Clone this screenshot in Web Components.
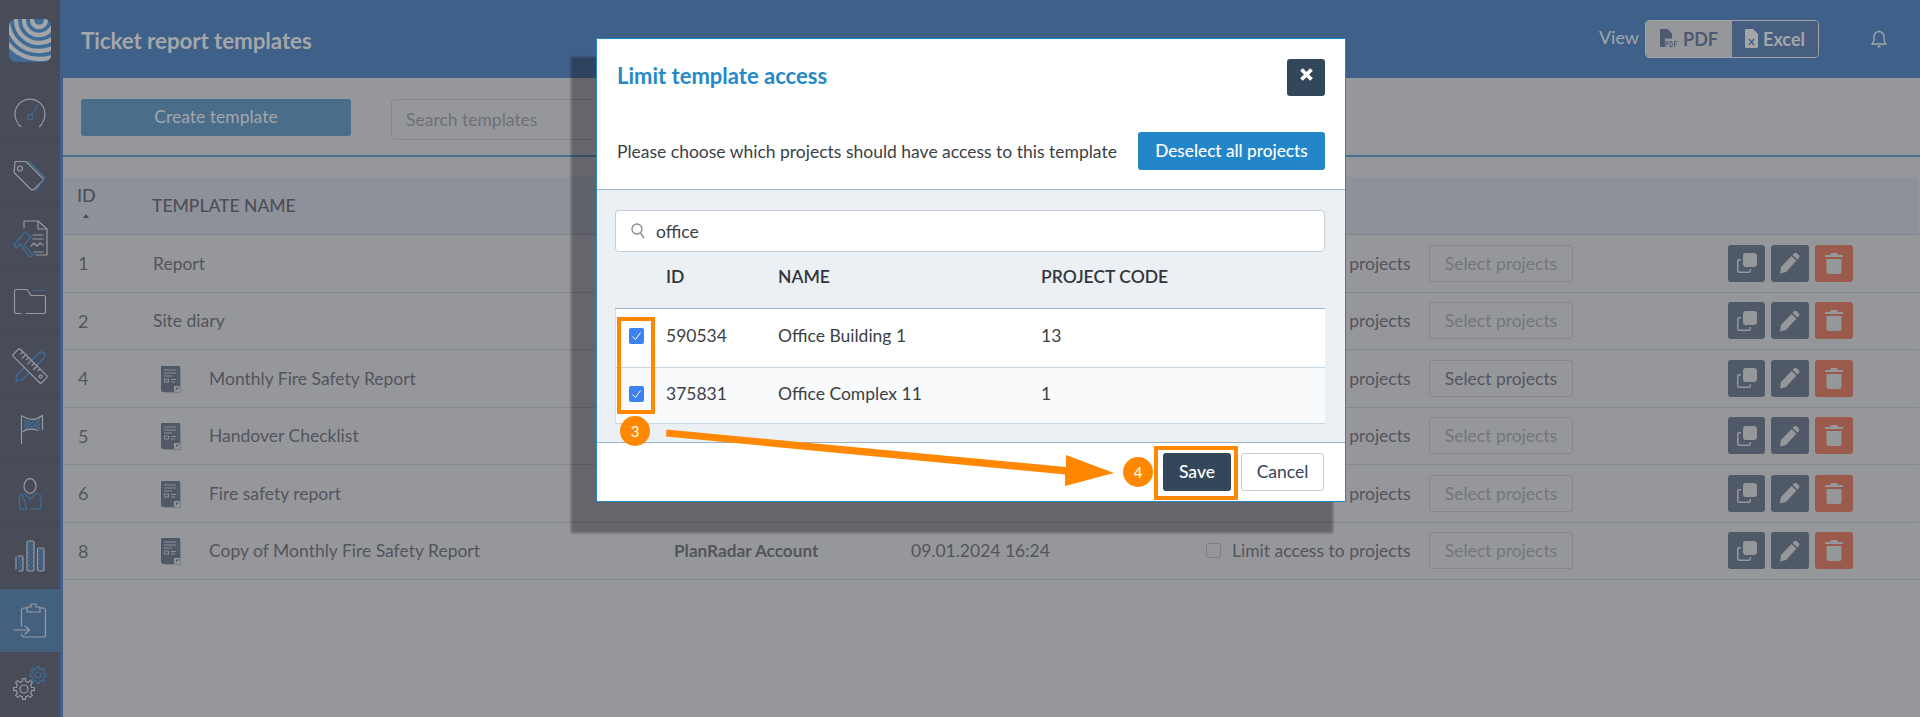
<!DOCTYPE html>
<html>
<head>
<meta charset="utf-8">
<title>Ticket report templates</title>
<style>
  html, body { margin: 0; height: 717px; overflow: hidden; background: #96979b; font-family: Lato, "Open Sans", sans-serif; }
</style>
</head>
<body>
<report-app></report-app>
<script>
'use strict';

const GREY = '#989aa0';
const BLUE = '#3f6c96';

function gearPath(cx, cy, r1, r2, teeth) {
  let d = '';
  const step = Math.PI * 2 / teeth;
  for (let i = 0; i < teeth; i++) {
    const a = i * step;
    const pts = [[r1, a - step * .5], [r1, a - step * .28], [r2, a - step * .18], [r2, a + step * .18], [r1, a + step * .28]];
    pts.forEach(([r, t], j) => {
      d += `${i === 0 && j === 0 ? 'M' : 'L'}${(cx + r * Math.cos(t)).toFixed(1)} ${(cy + r * Math.sin(t)).toFixed(1)} `;
    });
  }
  return d + 'Z';
}

// sidebar icons, drawn in page coordinates
const ICONS = [
  `<path d="M17.500 123.500A15 15 0 1 1 42.500 123.500" stroke="${GREY}"/><path d="M18 125l3 2.500M42 125l-2.500 2.500" stroke="${GREY}"/>
   <circle cx="30" cy="118" r="2.600" stroke="${BLUE}"/><path d="M31.500 116L37.500 106.500" stroke="${BLUE}"/>`,
  `<path d="M15 162H26L43 179Q44 180 43 181L34 190Q33 191 31 190L14 173Z" stroke="${GREY}"/><circle cx="20" cy="169" r="2.500" stroke="${GREY}"/>
   <path d="M29 162L45 178L36 191" stroke="${BLUE}"/>`,
  `<path d="M24 229V222H38L47 230V256H36" stroke="${GREY}"/><path d="M38 222V230H47M33 236H43M33 240H43M34 253H43" stroke="${GREY}"/>
   <path d="M31 247l3-3 3 3 3-3 3 2" stroke="${GREY}"/>
   <path d="M14 246L25 233L31 238L24 246L33 256L30 258L20 245L16 249Z" stroke="${BLUE}" stroke-width="1.300"/>`,
  `<path d="M21 314H16Q14.500 314 14.500 312V292Q14.500 290 16 290H27L31 296H44Q45.500 296 45.500 298V312Q45.500 314 44 314H26" stroke="${GREY}"/>
   <path d="M33 291H45" stroke="${BLUE}"/>`,
  `<path d="M16 381L17 375L39 353Q41 351 44 353Q46 356 44 358L22 380Z" stroke="${BLUE}" stroke-width="1.400"/>
   <g transform="rotate(45 30 366)"><rect x="10" y="361" width="40" height="10" rx="1" stroke="${GREY}" fill="#484c58"/>
   <path d="M15 361v3M19 361v5M23 361v3M27 361v5M31 361v3M35 361v5M39 361v3" stroke="${GREY}"/><circle cx="45" cy="366" r="1.500" stroke="${GREY}"/></g>`,
  `<path d="M24 419Q33 424 40 418V431Q33 426 24 432Z" fill="url(#hatch)" stroke="none"/>
   <path d="M21.500 416V444" stroke="${GREY}"/><path d="M23 417Q33 423 42.500 416V430" stroke="${GREY}"/><path d="M23 432Q30 428 38 431" stroke="${GREY}"/>`,
  `<ellipse cx="30" cy="486" rx="6" ry="7.300" stroke="${GREY}"/>
   <path d="M25 494L30 499L35 494H38Q41 494 41 498V506Q41 509 38 509H31M27 509H22Q19.500 509 19.500 506V498Q19.500 494 22 494Z" stroke="${BLUE}"/>`,
  `<rect x="27" y="542" width="7" height="30" rx="1.500" stroke="${GREY}" fill="url(#hatch)"/><rect x="37.500" y="549" width="6.500" height="23" rx="1.500" stroke="${GREY}" fill="url(#hatch)"/>
   <path d="M17 558H22Q23 558 23 559V571Q23 572 22 572H18V558Z" stroke="none" fill="url(#hatch)"/>
   <path d="M18 557H22Q23 557 23 558V571Q23 572 22 572H19M16 558V570" stroke="${GREY}"/>`,
  `<path d="M21.500 626V610Q21.500 608 24 608H27M40 608H43Q45.500 608 45.500 610V635Q45.500 637 43 637H25Q21.500 637 21.500 634" stroke="${GREY}"/>
   <path d="M27 612V607H31V604H36V607H40V612Z" stroke="${GREY}"/><path d="M14 630H29M25 626L29.500 630L25 634" stroke="${GREY}"/>`,
  `<path d="${gearPath(24, 690, 7.800, 10.500, 8)}" stroke="${GREY}"/><circle cx="24" cy="690" r="4" stroke="${GREY}"/>
   <path d="${gearPath(38, 676, 6.200, 8.400, 8)}" stroke="${BLUE}"/><circle cx="38" cy="676" r="3" stroke="${BLUE}"/>`
];

class SideItem extends HTMLElement {
  constructor() {
    super();
    this.attachShadow({ mode: 'open' });
  }
  connectedCallback() {
    const i = +this.getAttribute('index');
    const cy = [112, 175.5, 239, 302.5, 366, 429.5, 493, 557, 621, 685][i];
    this.shadowRoot.innerHTML = `
      <style>
        :host { display: flex; align-items: center; justify-content: center; width: 60px; box-sizing: border-box;
                height: var(--h, 63.6px); border-bottom: 1px solid #444853; }
        :host([active]) { background: #44607f; width: 63px; padding-right: 3px; border-bottom: 0; }
        :host([last]) { border-bottom: 0; }
        svg { display: block; fill: none; stroke-width: 1.2; stroke-linejoin: round; stroke-linecap: round; }
      </style>
      <svg width="40" height="40" viewBox="10 ${cy - 20} 40 40">
        <defs><pattern id="hatch" width="3" height="3" patternUnits="userSpaceOnUse" patternTransform="rotate(45)">
          <rect width="1.800" height="3" fill="${BLUE}"/></pattern></defs>
        ${ICONS[i]}
      </svg>`;
  }
}
customElements.define('side-item', SideItem);

class AppSidebar extends HTMLElement {
  constructor() {
    super();
    this.attachShadow({ mode: 'open' }).innerHTML = `
      <style>
        :host { display: block; width: 63px; height: 717px; flex: none; background: linear-gradient(90deg, #484c58 60px, #3e6089 60px); }
        .logo { height: 80px; display: flex; justify-content: center; padding-top: 19px; box-sizing: border-box; width: 60px; }
        .logo svg { display: block; }
      </style>
      <div class="logo">
        <svg width="42" height="43" viewBox="0 0 42 43">
          <defs><clipPath id="lc"><rect width="42" height="43" rx="7"/></clipPath></defs>
          <g clip-path="url(#lc)" fill="none" stroke="#a3a5a9" stroke-width="4.300">
            <rect width="42" height="43" fill="#3f6c96" stroke="none"/>
            <circle cx="30" cy="1" r="7"/><circle cx="30" cy="1" r="15"/><circle cx="30" cy="1" r="23"/><circle cx="30" cy="1" r="31"/><circle cx="30" cy="1" r="39"/>
          </g>
        </svg>
      </div>
      ${ICONS.map((_, i) => `<side-item index="${i}" ${i === 8 ? 'active' : ''} ${i === 9 ? 'last' : ''}></side-item>`).join('')}`;
  }
}
customElements.define('app-sidebar', AppSidebar);

class AppHeader extends HTMLElement {
  constructor() {
    super();
    this.attachShadow({ mode: 'open' }).innerHTML = `
      <style>
        :host { display: flex; align-items: center; height: 78px; background: #3e6089; padding-left: 18px; color: #a4a6aa; }
        h1 { margin: 0; font: 700 22.4px Lato, sans-serif; letter-spacing: -.1px; flex: 1; position: relative; top: 1px; }
        .view { font-size: 18px; margin-right: 6px; position: relative; top: -2px; }
        .seg { display: flex; width: 174px; height: 38px; box-sizing: border-box; border: 1px solid #a0a2a6; border-radius: 4px; overflow: hidden; font-weight: 700; font-size: 18px; }
        .seg div { flex: 1; display: flex; align-items: center; justify-content: center; gap: 5px; }
        .pdf { background: #96979b; color: #4c5a70; }
        .xls { background: #465f80; color: #a4a6aa; }
        .bell { margin: 0 33px 0 52px; display: block; }
      </style>
      <h1>Ticket report templates</h1>
      <span class="view">View</span>
      <div class="seg">
        <div class="pdf">
          <svg width="18" height="20" viewBox="0 0 18 20"><path d="M1 0H7.500L12 4.500V9.500H5V18H1Q0 18 0 17V1Q0 0 1 0Z" fill="#4c5a70"/><path d="M6 12.500V18M6 12.500H8V15H6M10 12.500V18H11.500L12.500 15.500L11.500 12.500ZM14.500 18V12.500H17.500M14.500 15H17" fill="none" stroke="#4c5a70" stroke-width=".9"/></svg>
          PDF
        </div>
        <div class="xls">
          <svg width="13" height="20" viewBox="0 0 13 20"><path d="M1 0H8L13 5V18Q13 19 12 19H1Q0 19 0 18V1Q0 0 1 0Z" fill="#a4a6aa"/><path d="M4 10l5 6M9 10l-5 6" stroke="#465f80" stroke-width="1.300"/></svg>
          Excel
        </div>
      </div>
      <svg class="bell" width="16" height="18" viewBox="0 0 16 18" fill="none" stroke="#a4a6aa" stroke-width="1.300"><path d="M1 14Q3 12 3 9V6.500A5 5 0 0 1 13 6.500V9Q13 12 15 14Z"/><path d="M6.500 16.500H9.500" stroke-width="1.800"/><path d="M8 .5V1.500"/></svg>`;
  }
}
customElements.define('app-header', AppHeader);

class TemplateToolbar extends HTMLElement {
  constructor() {
    super();
    this.attachShadow({ mode: 'open' }).innerHTML = `
      <style>
        :host { display: flex; height: 79px; box-sizing: border-box; padding: 21px 0 0 18px; gap: 40px; border-bottom: 2px solid #47708f; align-items: flex-start; }
        .create { width: 270px; height: 37px; border-radius: 3px; background: #4a6e8a; color: #a4a6aa; display: flex; align-items: center; justify-content: center; font-size: 17.5px; padding-bottom: 2px; box-sizing: border-box; }
        .search { width: 260px; height: 41px; box-sizing: border-box; border: 1px solid #85878c; border-radius: 4px; color: #6e7075; font-size: 17.5px; padding-left: 14px; display: flex; align-items: center; }
      </style>
      <div class="create">Create template</div>
      <div class="search">Search templates</div>`;
  }
}
customElements.define('template-toolbar', TemplateToolbar);

const COLS = '88px 522px 237px 295px 223px 299px 1fr';

class TemplateHead extends HTMLElement {
  constructor() {
    super();
    this.attachShadow({ mode: 'open' }).innerHTML = `
      <style>
        :host { display: grid; grid-template-columns: ${COLS}; margin: 20px 1px 0 1px; height: 58px; box-sizing: border-box; background: #8e9199; border-bottom: 1px solid #7e828b;
                font-weight: 500; font-size: 17.5px; color: #4d4f56; align-items: center; }
        .id { padding-left: 13px; font-size: 18px; line-height: 20px; position: relative; top: -4px; }
        .id i { display: block; width: 0; height: 0; margin: 9px 0 0 6px; border: 3.500px solid transparent; border-top: 0; border-bottom: 4px solid #4d4f56; }
      </style>
      <div class="id">ID<i></i></div>
      <div class="name">TEMPLATE NAME</div>`;
  }
}
customElements.define('template-head', TemplateHead);

class TemplateRow extends HTMLElement {
  constructor() {
    super();
    this.attachShadow({ mode: 'open' });
  }
  connectedCallback() {
    const a = n => this.getAttribute(n) || '';
    const doc = this.hasAttribute('doc') ? `
      <svg class="doc" width="21" height="28" viewBox="0 0 21 28">
        <path d="M19.500 2.500V26.500H3" fill="none" stroke="#7f8389" stroke-width="1.300"/>
        <path d="M1 0H18Q19 0 19 1V20L13 26H2Q0 26 0 24V1Q0 0 1 0Z" fill="#4f5967"/>
        <path d="M3 4H15M3 7H15M3 10H11" stroke="#8d9096" stroke-width="1"/>
        <rect x="3.500" y="13" width="4" height="3" fill="none" stroke="#8d9096"/><path d="M10 13.500H15M10 16H14" stroke="#8d9096"/>
        <path d="M13 26V20H19Z" fill="#96979b"/><path d="M15.500 24V22H18" fill="none" stroke="#4f5967" stroke-width="1.200"/>
      </svg>` : '';
    this.shadowRoot.innerHTML = `
      <style>
        :host { display: grid; grid-template-columns: ${COLS}; height: 57.5px; box-sizing: border-box; margin: 0 1px; border-bottom: 1px solid #85888f; align-items: center; font-size: 17.5px; color: #53555b; }
        .id { padding-left: 14px; font-size: 18px; }
        .name { display: flex; align-items: center; padding-left: 1px; }
        .doc { margin: 3px 27px 0 8px; flex: none; }
        .acc { font-weight: 700; font-size: 17.2px; }
        .limit { display: flex; align-items: center; gap: 11px; white-space: nowrap; }
        .limit i { width: 13px; height: 13px; border: 1px solid #7d7f84; border-radius: 2px; flex: none; }
        .sel { width: 144px; height: 37px; box-sizing: border-box; border: 1px solid #85878c; border-radius: 3px; display: flex; align-items: center; justify-content: center; color: #74767b; }
        :host([active]) .sel { color: #53565e; }
        .acts { display: flex; gap: 6px; }
        .acts span { height: 37px; width: 38px; border-radius: 3px; background: #4f5967; display: flex; align-items: center; justify-content: center; }
        .acts span:first-child { width: 37px; }
        .acts span.del { background: #9a5a4c; }
        svg.ic { display: block; fill: #96979b; }
      </style>
      <div class="id">${a('num')}</div>
      <div class="name">${doc}${a('name')}</div>
      <div class="acc">${a('account')}</div>
      <div class="date">${a('date')}</div>
      <div class="limit"><i></i>Limit access to projects</div>
      <div><div class="sel">Select projects</div></div>
      <div class="acts">
        <span><svg class="ic" width="22" height="22" viewBox="0 0 22 22"><rect x="7" y="1" width="14" height="14" rx="3"/><path d="M5 6V7H3Q1 7 1 9V19Q1 21 3 21H13Q15 21 15 19V17H13.500V19Q13.500 19.500 13 19.500H3Q2.500 19.500 2.500 19V9Q2.500 8.500 3 8.500H5Z"/></svg></span>
        <span><svg class="ic" width="20" height="22" viewBox="0 0 20 22"><path d="M14 1.500Q15.500 0 17 1.500L19 3.500Q20 5 19 6L17.500 7.500L12.500 3ZM11.500 4L16.500 8.500L6 20L0 21.500L1 15Z"/></svg></span>
        <span class="del"><svg class="ic" width="18" height="21" viewBox="0 0 18 21"><path d="M6 0H12L13 2H18V4H0V2H5ZM1.500 6H16.500V19Q16.500 21 14.500 21H3.500Q1.500 21 1.500 19Z"/></svg></span>
      </div>`;
  }
}
customElements.define('template-row', TemplateRow);

class CheckMark extends HTMLElement {
  constructor() {
    super();
    this.attachShadow({ mode: 'open' }).innerHTML = `
      <style>:host { display: block; width: 15px; height: 16px; } svg { display: block; }</style>
      <svg width="15" height="16" viewBox="0 0 15 16"><rect width="15" height="16" rx="2" fill="#3d82ee"/><path d="M3.500 8.500L6.500 11.500L11.500 4.500" fill="none" stroke="#fff" stroke-width="1"/></svg>`;
  }
}
customElements.define('check-mark', CheckMark);

class LimitModal extends HTMLElement {
  constructor() {
    super();
    const rows = [['590534', 'Office Building 1', '13'], ['375831', 'Office Complex 11', '1']];
    this.attachShadow({ mode: 'open' }).innerHTML = `
      <style>
        :host { position: absolute; left: 596px; top: 38px; width: 750px; height: 464px; box-sizing: border-box; background: #fff; border: 1px solid #2386c8;
                box-shadow: -19px 25px 2px 6px rgba(20,22,30,.38); display: flex; flex-direction: column; color: #3c3f45; font-size: 17.5px; }
        .top { padding: 20px 20px 0 20px; height: 151px; box-sizing: border-box; border-bottom: 1px solid #9db4cc; }
        .title { display: flex; justify-content: space-between; height: 37px; align-items: center; }
        h2 { margin: 0; font: 700 22px Lato, sans-serif; color: #2589c8; position: relative; top: -2px; }
        .close { width: 38px; height: 37px; background: #33475b; border-radius: 3px; display: flex; align-items: center; justify-content: center; padding-bottom: 6px; box-sizing: border-box; }
        .intro { display: flex; justify-content: space-between; align-items: center; margin-top: 36px; height: 38px; }
        .btn { height: 38px; box-sizing: border-box; border-radius: 3px; display: flex; align-items: center; justify-content: center; font-weight: 500; padding-bottom: 2px; }
        .blue { width: 187px; background: #2386c8; color: #fff; font-size: 17.2px; }
        .mid { background: #ebf0f5; height: 253px; box-sizing: border-box; padding: 20px 20px 0 18px; border-bottom: 1px solid #9fb0c0; }
        .search { height: 42px; box-sizing: border-box; background: #fff; border: 1px solid #c9cdd1; border-radius: 4px; display: flex; align-items: center; padding-left: 15px; gap: 11px; }
        .search svg { display: block; }
        .grid { display: grid; grid-template-columns: 51px 112px 263px 1fr; align-items: center; }
        .head { height: 57px; font-weight: 600; color: #33363b; border-bottom: 1px solid #9db4cc; padding-bottom: 8px; box-sizing: border-box; }
        .head div:first-child { grid-column: 2; }
        .row { height: 59px; background: #fff; border-bottom: 1px solid #c8d6e2; border-left: 1px solid #dde3e9; box-sizing: border-box; padding-bottom: 5px; grid-template-columns: 50px 112px 263px 1fr; }
        .row + .row { background: #f8fafc; height: 56px; padding-bottom: 4px; }
        .row check-mark { margin-left: 13px; }
        .foot { flex: 1; display: flex; justify-content: flex-end; align-items: flex-start; padding: 10px 21px 0 0; gap: 10px; }
        .save { width: 68px; background: #33475b; color: #fff; }
        .cancel { width: 83px; border: 1px solid #c9cdd1; color: #33475b; font-weight: 400; }
      </style>
      <div class="top">
        <div class="title">
          <h2>Limit template access</h2>
          <div class="close"><svg width="15" height="15" viewBox="0 0 15 15"><path d="M2.500 2.500L12.500 12.500M12.500 2.500L2.500 12.500" stroke="#fff" stroke-width="3.800"/></svg></div>
        </div>
        <div class="intro"><span>Please choose which projects should have access to this template</span><div class="btn blue">Deselect all projects</div></div>
      </div>
      <div class="mid">
        <div class="search">
          <svg width="14" height="16" viewBox="0 0 14 16" fill="none" stroke="#8a8d91" stroke-width="1.400"><circle cx="6" cy="6" r="5"/><path d="M9.500 10L13 15"/></svg>
          <span>office</span>
        </div>
        <div class="grid head"><div>ID</div><div>NAME</div><div>PROJECT CODE</div></div>
        ${rows.map(r => `<div class="grid row"><check-mark></check-mark><div>${r[0]}</div><div>${r[1]}</div><div>${r[2]}</div></div>`).join('')}
      </div>
      <div class="foot"><div class="btn save">Save</div><div class="btn cancel">Cancel</div></div>`;
  }
}
customElements.define('limit-modal', LimitModal);

// orange step markers drawn over the modal
class StepMarker extends HTMLElement {
  constructor() {
    super();
    this.attachShadow({ mode: 'open' }).innerHTML = `
      <style>
        :host { position: absolute; width: 30px; height: 30px; border-radius: 50%; background: #ff8800; color: #fff; font-size: 15px; display: flex; align-items: center; justify-content: center; }
      </style>
      <slot></slot>`;
  }
}
customElements.define('step-marker', StepMarker);

class StepFrame extends HTMLElement {
  constructor() {
    super();
    this.attachShadow({ mode: 'open' }).innerHTML = `
      <style>:host { position: absolute; box-sizing: border-box; border: 4px solid #ff8800; }</style>`;
  }
}
customElements.define('step-frame', StepFrame);

class StepArrow extends HTMLElement {
  constructor() {
    super();
    this.attachShadow({ mode: 'open' }).innerHTML = `
      <style>:host { position: absolute; left: 0; top: 0; } svg { display: block; }</style>
      <svg width="1920" height="717"><path d="M666.500 429.500L1066 467V455L1114 473L1065 486V474.500L666 436.500Z" fill="#ff8800"/></svg>`;
  }
}
customElements.define('step-arrow', StepArrow);

class ReportApp extends HTMLElement {
  constructor() {
    super();
    this.attachShadow({ mode: 'open' }).innerHTML = `
      <style>
        :host { display: flex; position: relative; width: 1920px; height: 717px; overflow: hidden; background: #96979b; }
        main { flex: 1; min-width: 0; }
      </style>
      <app-sidebar></app-sidebar>
      <main>
        <app-header></app-header>
        <template-toolbar></template-toolbar>
        <template-head></template-head>
        <template-row num="1" name="Report"></template-row>
        <template-row num="2" name="Site diary"></template-row>
        <template-row num="4" name="Monthly Fire Safety Report" doc active></template-row>
        <template-row num="5" name="Handover Checklist" doc></template-row>
        <template-row num="6" name="Fire safety report" doc></template-row>
        <template-row num="8" name="Copy of Monthly Fire Safety Report" doc account="PlanRadar Account" date="09.01.2024 16:24"></template-row>
      </main>
      <limit-modal></limit-modal>
      <step-frame style="left:617px;top:317px;width:38px;height:97px"></step-frame>
      <step-frame style="left:1154px;top:446px;width:84px;height:54px"></step-frame>
      <step-arrow></step-arrow>
      <step-marker style="left:620px;top:416px">3</step-marker>
      <step-marker style="left:1123px;top:457px">4</step-marker>`;
  }
}
customElements.define('report-app', ReportApp);
</script>
</body>
</html>
